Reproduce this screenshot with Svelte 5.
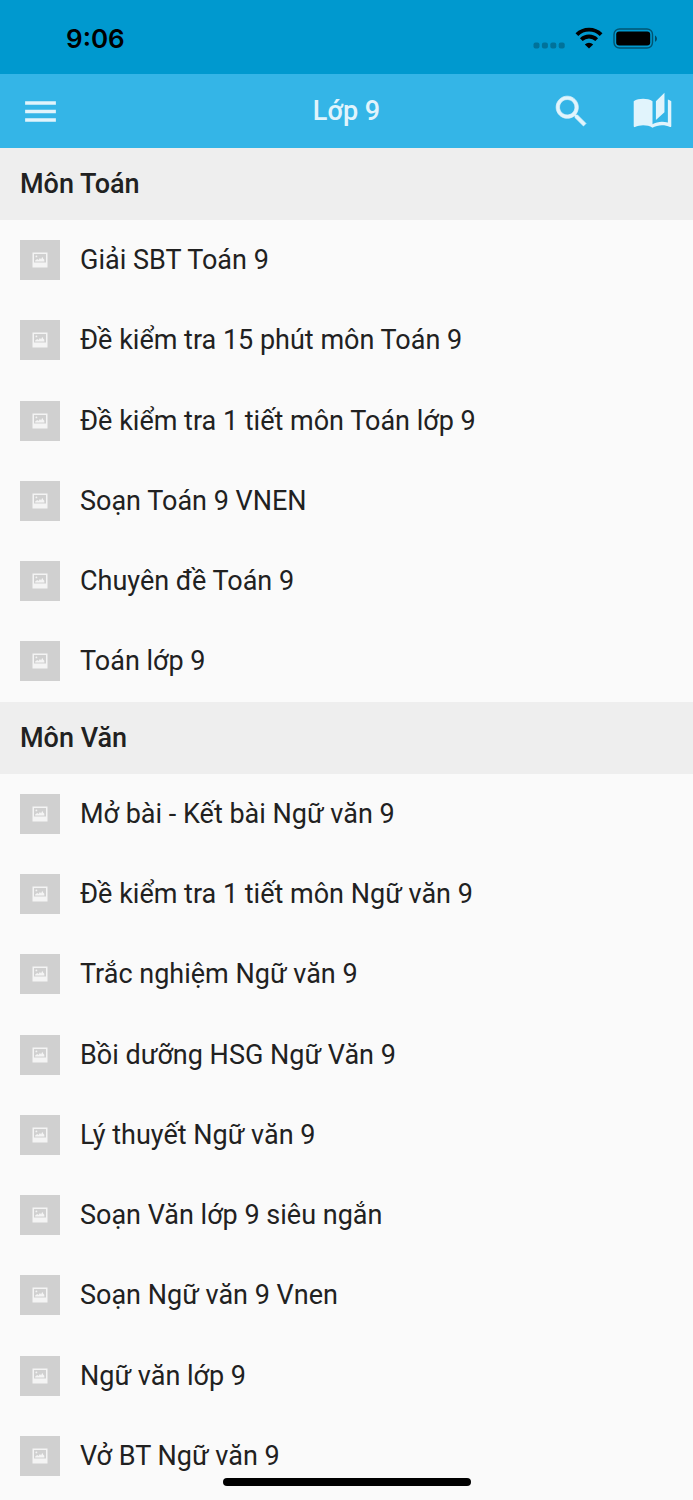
<script>
    let title = 'Lớp 9';

    let subjects = [
        {
            name: 'Môn Toán',
            items: [
                'Giải SBT Toán 9',
                'Đề kiểm tra 15 phút môn Toán 9',
                'Đề kiểm tra 1 tiết môn Toán lớp 9',
                'Soạn Toán 9 VNEN',
                'Chuyên đề Toán 9',
                'Toán lớp 9'
            ]
        },
        {
            name: 'Môn Văn',
            items: [
                'Mở bài - Kết bài Ngữ văn 9',
                'Đề kiểm tra 1 tiết môn Ngữ văn 9',
                'Trắc nghiệm Ngữ văn 9',
                'Bồi dưỡng HSG Ngữ Văn 9',
                'Lý thuyết Ngữ văn 9',
                'Soạn Văn lớp 9 siêu ngắn',
                'Soạn Ngữ văn 9 Vnen',
                'Ngữ văn lớp 9',
                'Vở BT Ngữ văn 9'
            ]
        }
    ];
</script>

<div class="screen">
    <div class="status">
        <span class="time">9:06</span>
        <div class="indicators">
            <svg width="32" height="28" viewBox="0 0 32 28" aria-hidden="true">
                <g fill="#000" opacity="0.25">
                    <rect x="0.5" y="17.5" width="6" height="6" rx="2" />
                    <rect x="8.9" y="17.5" width="6" height="6" rx="2" />
                    <rect x="17.3" y="17.5" width="6" height="6" rx="2" />
                    <rect x="25.7" y="17.5" width="6" height="6" rx="2" />
                </g>
            </svg>
            <svg width="28" height="28" viewBox="0 0 28 28" aria-hidden="true">
                <g fill="none" stroke="#000" stroke-width="3.9">
                    <path d="M1.9 9.6a17.2 17.2 0 0 1 24.2 0" />
                    <path d="M6.3 14.6a11 11 0 0 1 15.4 0" />
                </g>
                <path d="M14 23.4l-4.2-4a6 6 0 0 1 8.4 0z" />
            </svg>
            <svg width="45" height="28" viewBox="0 0 45 28" aria-hidden="true">
                <rect x="1" y="4" width="38.5" height="19" rx="5.5" fill="none" stroke="#000" stroke-opacity="0.45" stroke-width="1.4" />
                <rect x="3.2" y="6.5" width="34" height="14" rx="3" />
                <path d="M42 10.4c2.6 1.4 2.6 5 0 6.4z" opacity="0.5" />
            </svg>
        </div>
    </div>

    <header>
        <div class="side">
            <button aria-label="Menu">
                <svg viewBox="0 0 24 24"><path d="M3 18h18v-2H3v2zm0-5h18v-2H3v2zm0-7v2h18V6H3z" /></svg>
            </button>
        </div>
        <h1>{title}</h1>
        <div class="side end">
            <button aria-label="Tìm kiếm">
                <svg viewBox="0 0 24 24"><path stroke="currentColor" stroke-width="0.4" d="M15.5 14h-.79l-.28-.27C15.41 12.59 16 11.11 16 9.5 16 5.91 13.09 3 9.5 3S3 5.91 3 9.5 5.91 16 9.5 16c1.61 0 3.09-.59 4.23-1.57l.27.28v.79l5 4.99L20.49 19l-4.99-5zm-6 0C7.01 14 5 11.99 5 9.5S7.01 5 9.5 5 14 7.01 14 9.5 11.99 14 9.5 14z" /></svg>
            </button>
            <button aria-label="Sách">
                <svg viewBox="0 0 24 24"><path d="M19 1l-5 5v11l5-4.5V1zM1 6v14.65c0 .25.25.5.5.5.1 0 .15-.05.25-.05C3.1 20.45 5.05 20 6.5 20c1.95 0 4.05.4 5.5 1.5V6c-1.45-1.1-3.55-1.5-5.5-1.5S2.45 4.9 1 6zm22 13.5V6c-.6-.45-1.25-.75-2-1v13.5c-1.1-.35-2.3-.5-3.5-.5-1.7 0-4.15.65-5.5 1.5v2c1.35-.85 3.8-1.5 5.5-1.5 1.65 0 3.35.3 4.75 1.05.1.05.15.05.25.05.25 0 .5-.25.5-.5v-1.1z" /></svg>
            </button>
        </div>
    </header>

    {#each subjects as subject}
        <h2>{subject.name}</h2>
        <ul style="flex-grow: {subject.items.length}">
            {#each subject.items as item}
                <li>
                    <a href="#top">
                        <span class="thumb">
                            <svg width="16" height="16" viewBox="0 0 16 16" aria-hidden="true">
                                <path fill="#f4f4f4" fill-rule="evenodd" d="M.5.5h15v15H.5zM2 2v8.6h12V2z" />
                                <path fill="#f4f4f4" d="M3.2 9.4V8.4l2-1.4 1.4 1 1.3-2 1.2 1.4 1.1-2.6 1.1 2 1 1v1.6z" />
                                <circle cx="4.4" cy="4.4" r="0.9" fill="#f4f4f4" />
                            </svg>
                        </span>
                        {item}
                    </a>
                </li>
            {/each}
        </ul>
    {/each}

    <div class="home-bar"></div>
</div>

<style>
    :global(body) {
        margin: 0;
        background: #fafafa;
    }

    .screen {
        display: flex;
        flex-direction: column;
        min-height: 100vh;
        padding-bottom: 4px;
        box-sizing: border-box;
        font-family: Roboto, "Noto Sans", sans-serif;
        font-size: 27px;
        color: #212121;
    }

    .status {
        display: flex;
        align-items: center;
        justify-content: space-between;
        height: 74px;
        padding: 3px 35px 0 66px;
        box-sizing: border-box;
        background: #0099cf;
        color: #000;
    }

    .time {
        font-family: Inter, sans-serif;
        font-size: 26px;
        font-weight: 600;
        line-height: 32px;
    }

    .indicators {
        display: flex;
        gap: 10px;
    }

    header {
        display: grid;
        grid-template-columns: 1fr auto 1fr;
        align-items: center;
        height: 74px;
        background: #34b5e7;
        color: #e1f4fc;
    }

    .side {
        display: flex;
    }

    .end {
        justify-content: flex-end;
    }

    button {
        display: flex;
        align-items: center;
        justify-content: center;
        width: 81px;
        height: 74px;
        padding: 0;
        border: 0;
        background: none;
        color: inherit;
        cursor: pointer;
    }

    button svg {
        width: 41px;
        height: 41px;
        fill: currentColor;
    }

    h1,
    h2 {
        margin: 0;
        font-size: 27px;
        font-weight: 500;
    }

    h2 {
        padding: 0 20px;
        line-height: 72px;
        background: #eeeeee;
    }

    ul {
        display: flex;
        flex-direction: column;
        margin: 0;
        padding: 0;
        list-style: none;
    }

    li {
        display: flex;
        flex: 1 0 auto;
        min-height: 80px;
    }

    a {
        display: flex;
        flex: 1;
        align-items: center;
        gap: 20px;
        padding: 0 20px;
        color: inherit;
        text-decoration: none;
    }

    .thumb {
        display: flex;
        flex: none;
        align-items: center;
        justify-content: center;
        width: 40px;
        height: 40px;
        background: #d0d0d0;
    }

    /* floats over the end of the list */
    .home-bar {
        position: fixed;
        left: 50%;
        bottom: 14px;
        width: 248px;
        height: 8px;
        border-radius: 4px;
        background: #000;
        transform: translateX(-50%);
    }
</style>
